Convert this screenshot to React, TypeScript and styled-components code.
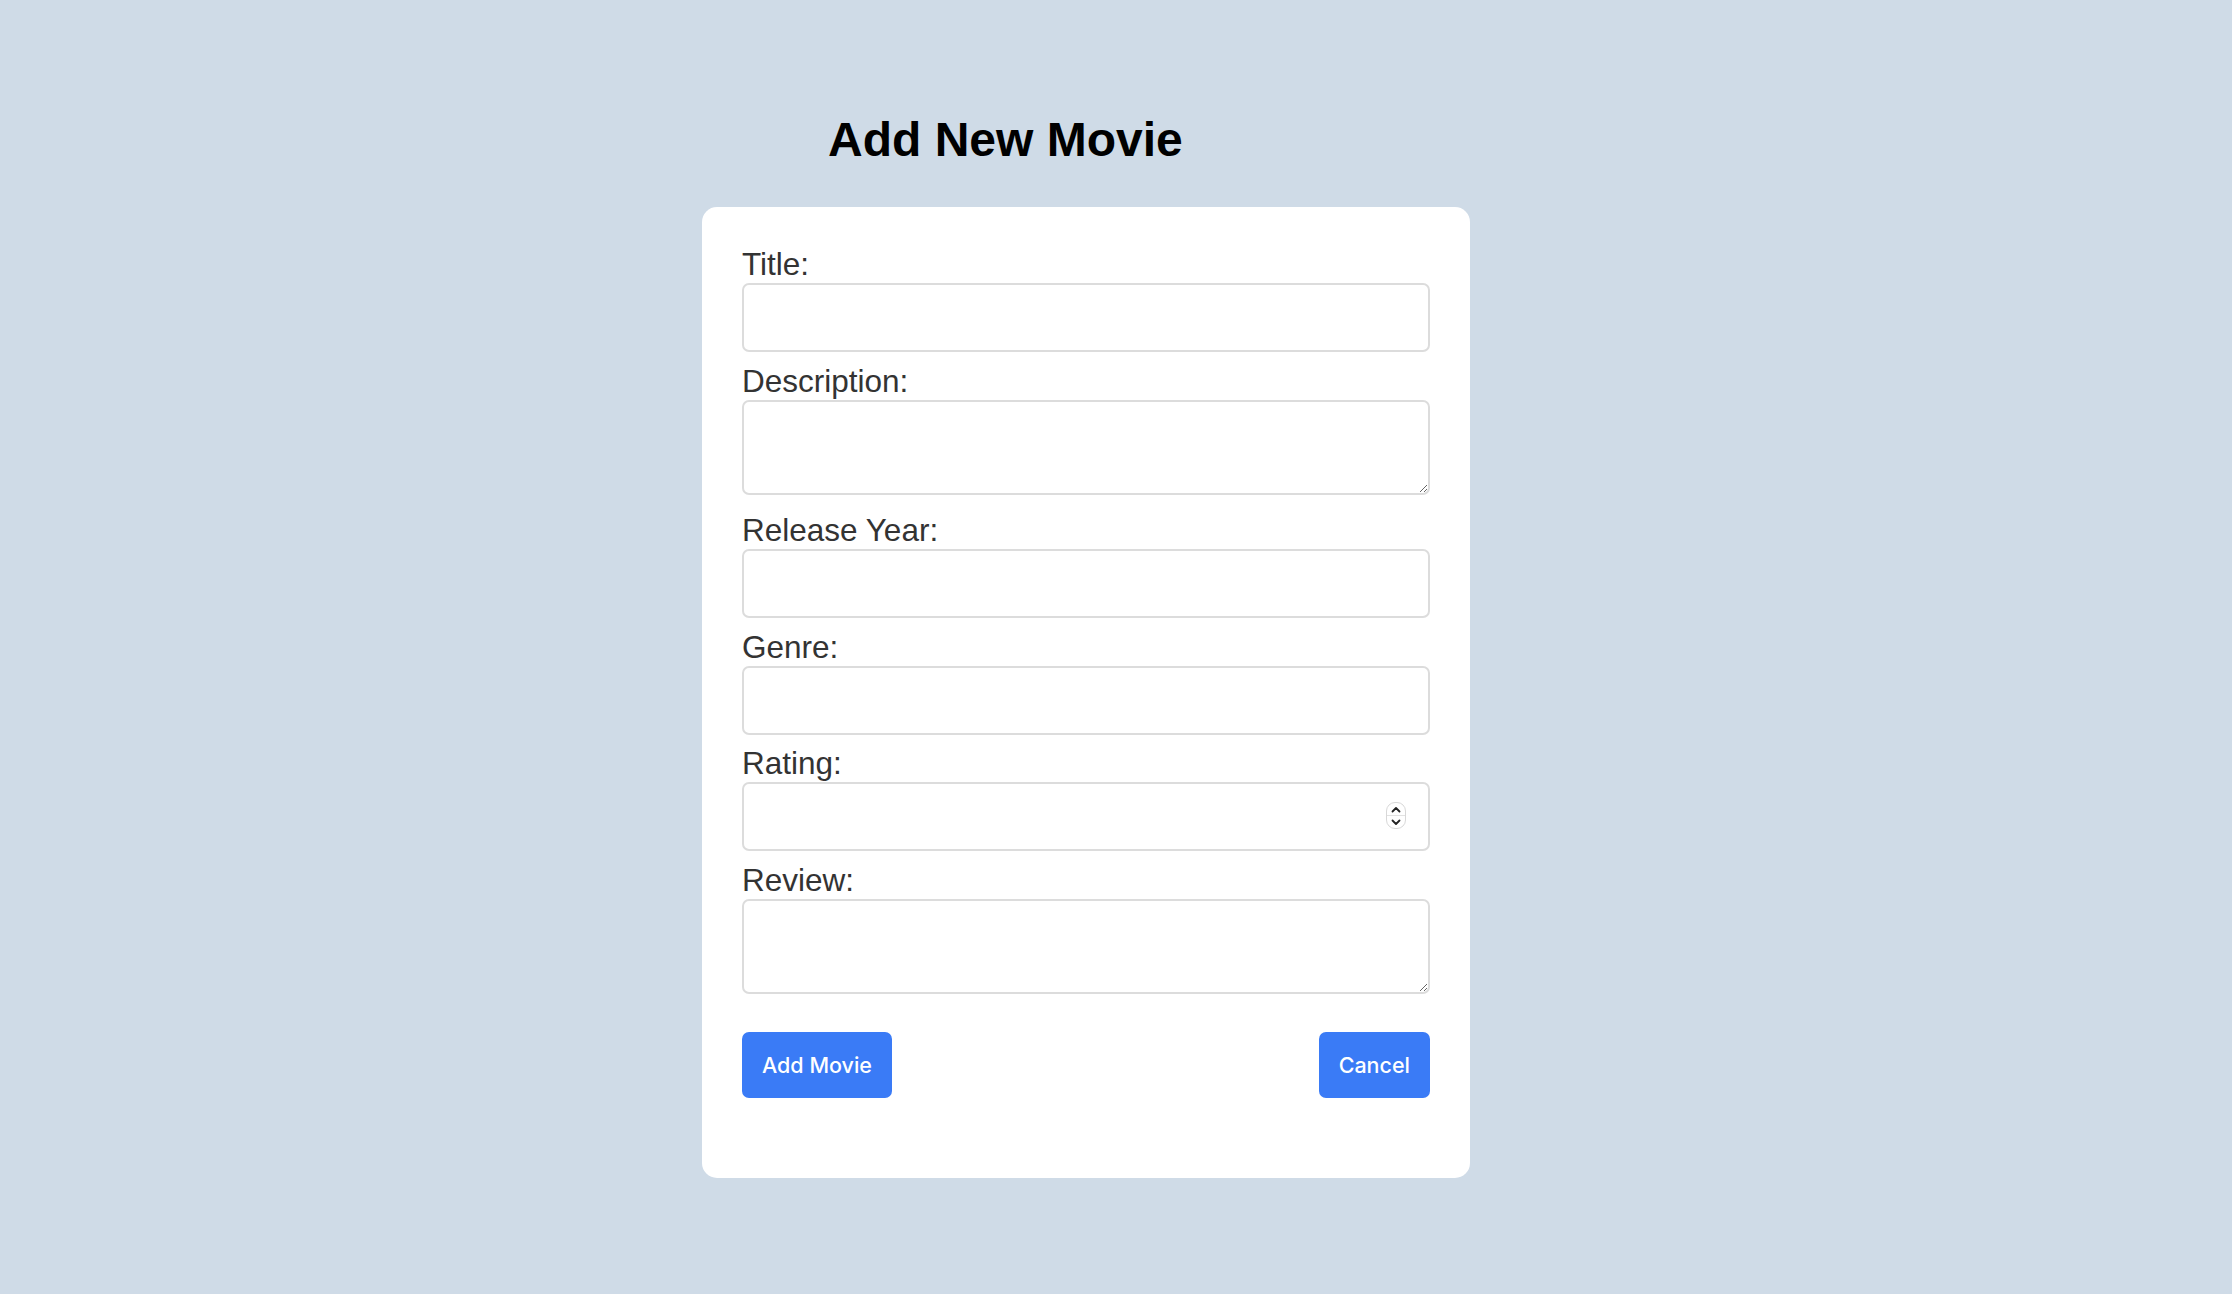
import styled, { createGlobalStyle } from "styled-components";

const GlobalStyle = createGlobalStyle`
  html, body {
    margin: 0;
    padding: 0;
    background: #cfdbe7;
  }
  body {
    font-family: "Liberation Sans", Arial, sans-serif;
    min-height: 100vh;
  }
`;

const Page = styled.div`
  display: flex;
  justify-content: center;
  padding: 112px 60px 80px 0;
`;

const Column = styled.div`
  display: flex;
  flex-direction: column;
  width: 768px;
`;

const Heading = styled.h1`
  margin: 0 0 40px 126px;
  font-family: "Liberation Sans", Arial, sans-serif;
  font-size: 48px;
  font-weight: 700;
  line-height: 55px;
  color: #000;
`;

const Card = styled.form`
  background: #fff;
  border-radius: 15px;
  padding: 36px 40px 80px 40px;
  display: flex;
  flex-direction: column;
`;

const Label = styled.label`
  display: block;
  font-size: 31.5px;
  line-height: 36px;
  padding-top: 3px;
  color: #333;
  margin-bottom: 1px;
`;

const fieldBase = `
  display: block;
  box-sizing: border-box;
  width: 100%;
  border: 2px solid #dcdcdc;
  border-radius: 7px;
  background: #fff;
  font-family: "Liberation Sans", Arial, sans-serif;
  font-size: 22px;
  padding: 8px 12px;
  outline: none;
`;

const Input = styled.input`
  ${fieldBase}
  height: 69px;
  margin: 0 0 7.5px 0;

  &::-webkit-inner-spin-button,
  &::-webkit-outer-spin-button {
    -webkit-appearance: none;
    margin: 0;
  }
  &[type="number"] {
    -moz-appearance: textfield;
  }
`;

const TextArea = styled.textarea<{ $last?: boolean }>`
  ${fieldBase}
  height: 95px;
  resize: vertical;
  margin: 0 0 ${(p) => (p.$last ? "38px" : "14.5px")} 0;
`;

const NumberWrap = styled.div`
  position: relative;
`;

const Spinner = styled.div`
  position: absolute;
  right: 24px;
  top: 20px;
  width: 20px;
  height: 27px;
  box-sizing: border-box;
  border: 1px solid #d8d8d8;
  border-radius: 9px;
  background: #fff;
  display: flex;
  flex-direction: column;
  pointer-events: none;

  svg {
    display: block;
  }
`;

const SpinHalf = styled.div<{ $top?: boolean }>`
  flex: 1;
  display: flex;
  align-items: center;
  justify-content: center;
  border-bottom: ${(p) => (p.$top ? "1px solid #e2e2e2" : "none")};
`;

const Actions = styled.div`
  display: flex;
  justify-content: space-between;
  align-items: center;
`;

const Button = styled.button`
  height: 66px;
  padding: 0 20px;
  border: none;
  border-radius: 7px;
  background: #3a7bf6;
  color: #fff;
  font-family: Inter, "Liberation Sans", Arial, sans-serif;
  font-size: 21.5px;
  font-weight: 500;
  cursor: pointer;
`;

function Chevron({ up }: { up?: boolean }) {
  return (
    <svg width="10" height="7" viewBox="0 0 10 7">
      <path
        d={up ? "M1.5 5.5 L5 2 L8.5 5.5" : "M1.5 1.5 L5 5 L8.5 1.5"}
        fill="none"
        stroke="#222"
        strokeWidth="1.8"
        strokeLinecap="round"
        strokeLinejoin="round"
      />
    </svg>
  );
}

function App() {
  return (
    <>
      <GlobalStyle />
      <Page>
        <Column>
          <Heading>Add New Movie</Heading>
          <Card onSubmit={(e) => e.preventDefault()}>
            <Label htmlFor="title">Title:</Label>
            <Input id="title" type="text" />

            <Label htmlFor="description">Description:</Label>
            <TextArea id="description" />

            <Label htmlFor="year">Release Year:</Label>
            <Input id="year" type="text" />

            <Label htmlFor="genre">Genre:</Label>
            <Input id="genre" type="text" />

            <Label htmlFor="rating">Rating:</Label>
            <NumberWrap>
              <Input id="rating" type="number" />
              <Spinner>
                <SpinHalf $top>
                  <Chevron up />
                </SpinHalf>
                <SpinHalf>
                  <Chevron />
                </SpinHalf>
              </Spinner>
            </NumberWrap>

            <Label htmlFor="review">Review:</Label>
            <TextArea id="review" $last />

            <Actions>
              <Button type="submit">Add Movie</Button>
              <Button type="button">Cancel</Button>
            </Actions>
          </Card>
        </Column>
      </Page>
    </>
  );
}

export default App;
